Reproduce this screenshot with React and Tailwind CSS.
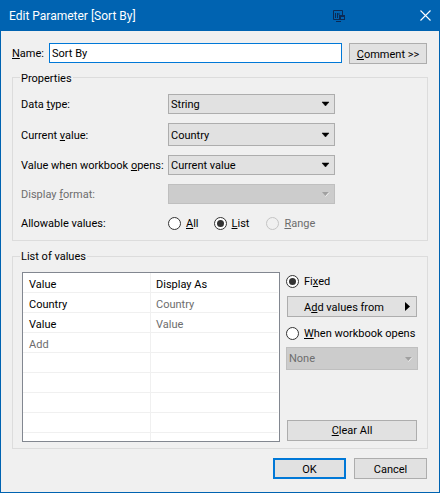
const Arrow = ({ disabled }) =>
  disabled ? (
    <svg width="9" height="6" viewBox="0 0 9 6" className="shrink-0">
      <path d="M1 1h7L4.5 5z" fill="#a0a0a0" />
      <path d="M8 1.5L4.5 5.5" stroke="#f0f0f0" strokeWidth="1" fill="none" />
    </svg>
  ) : (
    <svg width="9" height="6" viewBox="0 0 9 6" className="shrink-0">
      <path d="M1 1h7L4.5 5z" fill="#000" stroke="#000" strokeWidth="0.5" />
    </svg>
  );

// Roboto sits a pixel higher than the reference font, so flex-centered labels get a bit of top padding
const T = ({ children, className = "" }) => (
  <span className={`pt-[2px] whitespace-nowrap ${className}`}>{children}</span>
);

const Select = ({ value, height = "h-5" }) => (
  <div className={`w-[167px] ${height} flex items-center justify-between pl-[2px] pr-[4px] bg-[#e1e1e1] border border-[#adadad]`}>
    <T>{value}</T>
    <Arrow />
  </div>
);

const Radio = ({ checked, disabled }) => (
  <span
    className={`w-[13px] h-[13px] rounded-full border flex items-center justify-center shrink-0 ${
      disabled ? "border-[#c4c4c4] bg-[#f0f0f0]" : "border-[#333333] bg-white"
    }`}
  >
    {checked && <span className="w-[7px] h-[7px] rounded-full bg-[#333333]" />}
  </span>
);

const Row = ({ left, right, className = "h-5" }) => (
  <div className={`${className} flex border-b border-[#f0f0f0] mr-[1px]`}>
    <div className="w-[128px] pl-[6px] pt-[4px] border-r border-[#f0f0f0] flex items-center">{left}</div>
    <div className="flex-1 pl-[5px] pt-[4px] flex items-center text-[#6d6d6d]">{right}</div>
  </div>
);

export default function App() {
  return (
    <div className="w-[440px] h-[493px] flex flex-col bg-[#f0f0f0] border-x border-b border-[#0063b1] text-[11px] leading-[16px] text-black font-['Roboto','Noto_Sans',sans-serif] overflow-hidden">
      {/* Title bar */}
      <div className="h-[31px] -mx-[1px] shrink-0 bg-[#0063b1] flex items-center pl-[9px] text-[12px] text-white">
        <span className="w-[324px]">Edit Parameter [Sort By]</span>
        <svg width="12" height="12" viewBox="0 0 12 12" className="shrink-0">
          <path d="M.5.5h9v9h-9zM3 11.5h5" stroke="#0b2a55" fill="none" />
          <path d="M2.5 3v5M4.5 3v5M6 3v2" stroke="#0b2a55" fill="none" />
          <rect x="6" y="5" width="6" height="5" fill="#0b2a55" />
          <rect x="8" y="7" width="3" height="2" fill="#0063b1" />
        </svg>
        <svg width="11" height="11" viewBox="0 0 11 11" className="ml-[75px] shrink-0">
          <path d="M.5.5l10 10M10.5.5l-10 10" stroke="#fff" strokeWidth="1.1" fill="none" />
        </svg>
      </div>

      {/* Name */}
      <div className="mt-[12px] ml-[11px] flex items-start">
        <label className="w-[37px] h-5 flex items-center">
          <T><u>N</u>ame:</T>
        </label>
        <div className="w-[293px] h-5 border border-[#0078d7] bg-white flex items-center pl-[2px]">
          <T>Sort By</T>
        </div>
        <button className="ml-[7px] w-[78px] h-[21px] bg-[#e1e1e1] border border-[#adadad] flex items-center justify-center">
          <T><u>C</u>omment &gt;&gt;</T>
        </button>
      </div>

      {/* Properties */}
      <fieldset className="mt-[5px] ml-[11px] w-[416px] h-[172px] border border-[#dcdcdc] pl-[8px]">
        <legend className="-ml-[1px] px-[1px] h-4 leading-[19px]">Properties</legend>
        <div className="mt-[9px] flex flex-col">
          <div className="flex items-center h-5">
            <T className="w-[147px]">Data <u>t</u>ype:</T>
            <Select value="String" />
          </div>
          <div className="flex items-center mt-[9px]">
            <T className="w-[147px]">Current <u>v</u>alue:</T>
            <Select value="Country" height="h-[23px]" />
          </div>
          <div className="flex items-center mt-[9px]">
            <T className="w-[147px]">Value when workbook <u>o</u>pens:</T>
            <Select value="Current value" />
          </div>
          <div className="flex items-center mt-[9px] text-[#6d6d6d]">
            <T className="w-[147px]">Display <u>f</u>ormat:</T>
            <div className="w-[167px] h-5 flex items-center justify-end pr-[4px] bg-[#cccccc] border border-[#bfbfbf]">
              <Arrow disabled />
            </div>
          </div>
          <div className="flex items-center mt-[10px]">
            <T className="w-[147px]">Allowable values:</T>
            <Radio />
            <T className="ml-[5px]"><u>A</u>ll</T>
            <span className="ml-[15px]"><Radio checked /></span>
            <T className="ml-[5px]"><u>L</u>ist</T>
            <span className="ml-[17px]"><Radio disabled /></span>
            <T className="ml-[5px] text-[#6d6d6d]"><u>R</u>ange</T>
          </div>
        </div>
      </fieldset>

      {/* List of values */}
      <fieldset className="mt-[7px] ml-[11px] w-[416px] h-[201px] border border-[#dcdcdc] pl-[9px]">
        <legend className="-ml-[2px] px-[1px] h-4 leading-[18px]">List of values</legend>
        <div className="mt-[8px] flex items-start">
          <div className="w-[258px] h-[170px] border border-[#828790] bg-white overflow-hidden">
            <Row left="Value" right={<span className="text-black">Display As</span>} />
            <Row left="Country" right="Country" />
            <Row left="Value" right="Value" />
            <Row left={<span className="text-[#6d6d6d]">Add</span>} />
            <Row />
            <Row />
            <Row />
            <Row />
            <Row />
          </div>
          <div className="ml-[6px] flex flex-col w-[132px]">
            <div className="flex items-center gap-[5px] h-[18px]">
              <Radio checked />
              <T>Fi<u>x</u>ed</T>
            </div>
            <button className="mt-[6px] ml-[1px] w-[130px] h-[21px] bg-[#e1e1e1] border border-[#adadad] flex items-center pl-[16px] pr-[6px] justify-between">
              <T>A<u>d</u>d values from</T>
              <svg width="5" height="9" viewBox="0 0 5 9"><path d="M0 0l5 4.5L0 9z" fill="#000" /></svg>
            </button>
            <div className="mt-[7px] flex items-center gap-[5px] h-[18px]">
              <Radio />
              <T><u>W</u>hen workbook opens</T>
            </div>
            <div className="mt-[5px] w-[132px] h-[23px] flex items-center justify-between pl-[2px] pr-[4px] bg-[#cccccc] border border-[#bfbfbf] text-[#6d6d6d]">
              <span>None</span>
              <Arrow disabled />
            </div>
            <button className="mt-[50px] ml-[1px] w-[130px] h-[21px] bg-[#e1e1e1] border border-[#adadad] flex items-center justify-center">
              <span><u>C</u>lear All</span>
            </button>
          </div>
        </div>
      </fieldset>

      {/* Footer */}
      <div className="mt-[9px] ml-[272px] flex items-center">
        <button className="w-[73px] h-[21px] bg-[#e1e1e1] border-2 border-[#0078d7] flex items-center justify-center">
          <T>OK</T>
        </button>
        <button className="ml-[8px] w-[73px] h-[21px] bg-[#e1e1e1] border border-[#adadad] flex items-center justify-center">
          <T>Cancel</T>
        </button>
      </div>
    </div>
  );
}
